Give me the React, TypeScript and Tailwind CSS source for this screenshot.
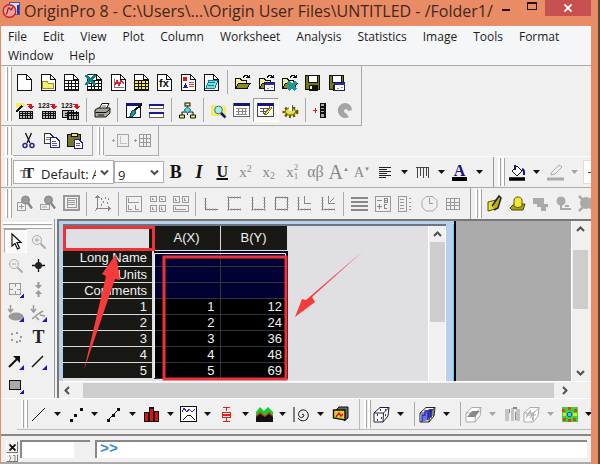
import { ReactNode } from 'react';

const MENUS = [
	'File', 'Edit', 'View', 'Plot', 'Column', 'Worksheet', 'Analysis', 'Statistics', 'Image', 'Tools', 'Format', 'Window', 'Help',
];

const ROWS = [
	{ label: 'Long Name', a: '', b: '' },
	{ label: 'Units', a: '', b: '' },
	{ label: 'Comments', a: '', b: '' },
	{ label: '1', a: '1', b: '12' },
	{ label: '2', a: '2', b: '24' },
	{ label: '3', a: '3', b: '36' },
	{ label: '4', a: '4', b: '48' },
	{ label: '5', a: '5', b: '69' },
];

const Svg = ({ children, smooth }: { children: ReactNode; smooth?: boolean }) => (
	<svg
		className="size-[17px] shrink-0 overflow-visible"
		viewBox="0 0 17 17"
		fill="none"
		stroke="#111"
		shapeRendering={smooth ? 'auto' : 'crispEdges'}
		aria-hidden="true"
	>
		{children}
	</svg>
);

const Page = ({ children }: { children?: ReactNode }) => (
	<Svg>
		<path d="M1.5 .5H10.5L15.5 5.5V16.5H1.5Z" fill="#fff" strokeWidth="1.4" />
		<path d="M10.5 .5V5.5H15.5" />
		{children}
	</Svg>
);

const Grid = ({ fill = '#fff' }: { fill?: string }) => (
	<>
		<rect x="1.5" y="6.5" width="14" height="9" fill={fill} />
		<path d="M5 6.500V15.500M8.500 6.500V15.500M12 6.500V15.500M1.500 9.500H15.500M1.500 12.500H15.500" />
	</>
);

const Folder = ({ children }: { children?: ReactNode }) => (
	<Svg>
		<path d="M1.5 14.500V4.500H6L7.500 6H12.500V9" fill="#f3efa0" />
		<path d="M1.500 14.500L4.500 9.500H16L13 14.500Z" fill="#8b8a1c" />
		<path d="M9 3.500C11 .8 13 .8 14.500 2.800M15.500 .5V3.500H12" />
		{children}
	</Svg>
);

const MiniWindow = () => (
	<>
		<rect x="6.5" y="8.500" width="10" height="8" fill="#fff" stroke="#223" />
		<path d="M6.500 9.500H16.500" stroke="#2b2bc0" strokeWidth="2" />
		<path d="M9 14.500H11M13 13.500H15" stroke="#88c" />
	</>
);

const Floppy = ({ children }: { children?: ReactNode }) => (
	<Svg>
		<path d="M1.500 1.500H15.500V15.500H1.500Z" fill="#77770f" strokeWidth="1.500" />
		<rect x="4" y="1.500" width="9" height="7" fill="#fff" />
		<rect x="5" y="11" width="8" height="5" fill="#111" />
		<rect x="6" y="12" width="2" height="3" fill="#eee" stroke="none" />
		{children}
	</Svg>
);

const ImportTable = ({ kind }: { kind: 'wizard' | 'one' | 'many' }) => (
	<Svg>
		{kind === 'wizard' ? (
			<>
				<path d="M0 1H8V6H0Z" fill="#f7ee54" stroke="none" />
				<path d="M0 10L6 4" strokeWidth="2.500" />
			</>
		) : (
			<text x="-1" y="6" className="font-['Liberation_Sans'] text-[7px] font-bold" fill="#111" stroke="none">
				123
			</text>
		)}
		<path d="M11 2.500H15V5M13 4.500L15 7L17 4.500Z" stroke="#e01515" fill="#e01515" />
		{kind === 'many' && <rect x="0" y="8" width="11" height="7" fill="#bbb" />}
		<rect x={kind === 'many' ? 5 : 3} y={kind === 'many' ? 10 : 9} width={kind === 'many' ? 11 : 13} height="7" fill="#bbb" />
		<path d="M6.500 9V16.500M9 9V16.500M11.500 9V16.500M14 9V16.500M3 11.500H16M3 13.500H16" />
	</Svg>
);

const ScissorsIcon = () => (
	<Svg smooth>
		<path d="M5.500 1L10 11M11.500 1L7 11" strokeWidth="1.300" />
		<circle cx="5" cy="13.500" r="2" stroke="#1f1f9a" strokeWidth="1.400" />
		<circle cx="12" cy="13.500" r="2" stroke="#1f1f9a" strokeWidth="1.400" />
	</Svg>
);

const Lens = ({ plus, body }: { plus?: boolean; body?: boolean }) => (
	<Svg smooth>
		{body ? (
			<>
				<rect x="1.500" y={plus ? 7.500 : 9.500} width={plus ? 8 : 9} height={plus ? 8 : 5} stroke="#999" />
				<path d={plus ? 'M5.500 9V14M3 11.500H8' : 'M3 12H8'} stroke="#999" />
				<circle cx="9.500" cy="5" r="4" fill="#999" stroke="#888" />
				<path d="M12 8L16 13.500" stroke="#888" strokeWidth="2.500" />
			</>
		) : (
			<>
				<circle cx="7" cy="7" r="4.500" stroke="#aaa" />
				<path d={plus ? 'M7 4.500V9.500M4.500 7H9.500' : 'M4.500 7H9.500'} stroke="#aaa" />
				<path d="M10.500 10.500L15.500 15.500" stroke="#aaa" strokeWidth="2" />
			</>
		)}
	</Svg>
);

const Panels = ({ rows }: { rows: [number, number, number, number][] }) => (
	<Svg>
		{rows.map(([x, y, w, h]) => (
			<g key={`${x}-${y}`} stroke="#999">
				<rect x={x} y={y} width={w} height={h} />
				<path d={`M${x + 2} ${y + 2}V${y + h - 2}H${x + w - 2}`} />
			</g>
		))}
	</Svg>
);

const Axes = ({ d, extra }: { d: string; extra?: string }) => (
	<Svg>
		<path d={d} stroke="#777" />
		<path d={d} stroke="#aaa" strokeWidth="3" strokeDasharray="1 2" opacity=".6" />
		{extra && <path d={extra} stroke="#888" />}
	</Svg>
);

const Cube = ({ gray, children }: { gray?: boolean; children?: ReactNode }) => (
	<Svg smooth>
		<path d="M1 7L7 1.500H16L15 10L10 16H1Z" fill="#fff" stroke={gray ? '#aaa' : '#222'} />
		<path d="M1 7H10.500L16 1.500M10.500 7L10 16" stroke={gray ? '#aaa' : '#222'} />
		{children}
	</Svg>
);

const Tool = ({ label, children, className = '' }: { label: string; children: ReactNode; className?: string }) => (
	<button type="button" aria-label={label} className={`flex h-6 min-w-0 flex-1 items-center justify-center ${className}`}>
		{children}
	</button>
);

const Sep = () => (
	<div className="flex h-6 w-2 shrink-0 justify-center">
		<div className="w-px bg-[#aaa]" />
	</div>
);

const Grip = () => (
	<div className="mr-px flex shrink-0 gap-px self-stretch py-px pl-1">
		<div className="w-[3px] border-r border-[#a5a5a5] bg-white" />
		<div className="w-[3px] border-r border-[#a5a5a5] bg-white" />
	</div>
);

const Arrow = ({ label, gray }: { label: string; gray?: boolean }) => (
	<button type="button" aria-label={label} className="flex h-6 min-w-0 flex-1 items-center justify-center">
		<svg className="h-1 w-[7px]" viewBox="0 0 7 4" aria-hidden="true">
			<path d="M0 0H7L3.500 4Z" fill={gray ? '#a5a5a5' : '#111'} />
		</svg>
	</button>
);

const Chevron = ({ d }: { d: string }) => (
	<svg className="size-[9px]" viewBox="0 0 9 9" fill="none" stroke="#505050" strokeWidth="2" aria-hidden="true">
		<path d={d} />
	</svg>
);

const TitleBar = () => (
	<header className="flex h-[26px] items-start bg-[#e98c66]">
		<svg className="mt-[2px] mr-1 ml-[2px] h-4 w-[18px] shrink-0" viewBox="0 0 18 16" fill="none" aria-hidden="true">
			<rect x="7.500" y=".5" width="10" height="12" fill="#d7def8" stroke="#4254b0" />
			<path d="M16 3V12" stroke="#2338a8" strokeWidth="2" />
			<circle cx="7.500" cy="9" r="6.300" fill="#eea09a" stroke="#c2272d" strokeWidth="1.500" />
			<path d="M4 12C6 12 5 6 7 6S8 11 11 5" stroke="#a81c24" strokeWidth="1.300" />
		</svg>
		<h1 className="min-w-0 flex-1 text-[16px] leading-[22px] whitespace-nowrap text-[#40271b]">
			OriginPro 8 - C:\Users\...\Origin User Files\UNTITLED - /Folder1/
		</h1>
		<button type="button" aria-label="Minimize" className="flex h-4 w-[26px] shrink-0 items-center justify-center">
			<span className="mt-1 h-[2px] w-2 bg-[#221510]" />
		</button>
		<button type="button" aria-label="Maximize" className="flex h-4 w-[26px] shrink-0 items-center justify-center">
			<span className="mt-[-4px] h-2 w-[10px] border border-t-2 border-[#221510]" />
		</button>
		<button type="button" aria-label="Close" className="mr-[7px] flex h-4 w-[46px] shrink-0 items-center justify-center bg-[#c75050]">
			<svg className="size-2" viewBox="0 0 8 8" stroke="#fff" strokeWidth="1.800" aria-hidden="true">
				<path d="M.5 .5L7.500 7.500M7.500 .5L.5 7.500" />
			</svg>
		</button>
	</header>
);

const StandardToolbar = () => (
	<div className="flex w-[361px] border-r border-b border-[#aaa] pb-[3px]">
		<Grip />
		<div className="flex flex-col gap-1 pt-1">
			<div className="flex w-[335px]">
				<Tool label="New project"><Page /></Tool>
				<Tool label="New folder">
					<Page><path d="M2.500 14.500V7.500H7L8 9H13.500V14.500Z" fill="#f4ee75" stroke="#998f25" /></Page>
				</Tool>
				<Tool label="New worksheet"><Page><Grid /></Page></Tool>
				<Tool label="New Excel">
					<Page>
						<Grid />
						<path d="M0 1L9 11M9 1L0 11" stroke="#12808b" strokeWidth="3" />
					</Page>
				</Tool>
				<Tool label="New graph">
					<Page>
						<path d="M4.500 5V13.500H14" stroke="#777" />
						<path d="M5 11L7 7L9 11L11 7L14 9" stroke="#e02030" strokeWidth="1.400" />
					</Page>
				</Tool>
				<Tool label="New matrix"><Page><Grid fill="#f5ec45" /></Page></Tool>
				<Tool label="New function">
					<Page>
						<text x="3" y="13" className="font-['Liberation_Sans'] text-[11px] font-bold" fill="#111" stroke="none">fx</text>
					</Page>
				</Tool>
				<Tool label="New layout">
					<Page>
						<path d="M3 3H7V7H3Z" fill="#e01818" stroke="none" />
						<path d="M9 8.500H14M9 10.500H14M9 12.500H14" stroke="#e24040" />
						<path d="M3 14L5.500 9L8 14Z" fill="#1d1da5" stroke="none" />
					</Page>
				</Tool>
				<Tool label="New notes">
					<Page>
						<path d="M6 6H15L12 14H3Z" fill="#7adce5" stroke="#147c88" />
						<path d="M6 8.500H12M5 11H11" stroke="#147c88" />
					</Page>
				</Tool>
				<Sep />
				<Tool label="Open"><Folder /></Tool>
				<Tool label="Open template"><Folder><MiniWindow /></Folder></Tool>
				<Tool label="Open Excel"><Folder><path d="M7 8L15 16M15 8L7 16" stroke="#159aa5" strokeWidth="3" /></Folder></Tool>
				<Tool label="Save project"><Floppy /></Tool>
				<Tool label="Save template"><Floppy><MiniWindow /></Floppy></Tool>
			</div>
			<div className="flex w-[343px]">
				<Tool label="Import wizard"><ImportTable kind="wizard" /></Tool>
				<Tool label="Import single ASCII"><ImportTable kind="one" /></Tool>
				<Tool label="Import multiple ASCII"><ImportTable kind="many" /></Tool>
				<Sep />
				<Tool label="Print">
					<Svg smooth>
						<path d="M5 7L8 1.500H15L12.500 7Z" fill="#fff" />
						<path d="M1 8L4 6H16V11L12 15H1Z" fill="#a6a79c" />
						<path d="M1.500 10.500H12L15.500 7.500M4 13H10" />
						<path d="M8 4H12" stroke="#777" />
					</Svg>
				</Tool>
				<Sep />
				<Tool label="Refresh">
					<Svg>
						<rect x="1.500" y="1.500" width="14" height="14" fill="#fff" />
						<path d="M1 2.500H16" stroke="#15157d" strokeWidth="3" />
						<path d="M17 2L9 9" strokeWidth="2" />
						<path d="M5 14L7 9L10 8L11 11L8 14Z" fill="#159aa5" stroke="#0d5962" />
					</Svg>
				</Tool>
				<Tool label="Duplicate">
					<Svg>
						<rect x="1.500" y="2.500" width="14" height="4" fill="#fff" stroke="#666" />
						<path d="M1 2.500H16" stroke="#1a1a90" strokeWidth="2" />
						<rect x="1.500" y="10.500" width="14" height="5" fill="#fff" stroke="#666" />
						<path d="M1 10.500H16" stroke="#1a1a90" strokeWidth="2" />
					</Svg>
				</Tool>
				<Sep />
				<Tool label="Custom routine">
					<Svg smooth>
						<path d="M8.500 4V13M3 14V10H14V14" />
						<rect x="6" y="1" width="5" height="3" fill="#f2ec62" />
						<path d="M8.500 5L12 8L8.500 11L5 8Z" fill="#55d7e0" stroke="#167984" />
						<path d="M.5 13H5.500V16H.5ZM11.500 13H16.500V16H11.500Z" fill="#f2ec62" />
					</Svg>
				</Tool>
				<Sep />
				<Tool label="Project explorer">
					<Svg smooth>
						<path d="M1 3H6L7 4H16V14H1Z" fill="#f4ec68" stroke="none" />
						<circle cx="8.500" cy="8" r="3.800" fill="#a8edf2" stroke="#207b88" />
						<path d="M11 11L15.500 15.500" stroke="#15157d" strokeWidth="2.500" />
					</Svg>
				</Tool>
				<Tool label="Results log">
					<Svg>
						<rect x=".5" y="1.500" width="16" height="13" fill="#fff" stroke="#666" />
						<path d="M.5 2.500H16.500" stroke="#15157d" strokeWidth="3" />
						<path d="M3 6.500H14M3 9.500H14M3 12H14M5.500 6V12M9 6V12M12 6V12" stroke="#888" />
					</Svg>
				</Tool>
				<Tool label="Command window" className="border border-white border-t-[#999] border-l-[#999] bg-[#f8f8f8]">
					<Svg>
						<rect x=".5" y="1.500" width="16" height="13" fill="#fff" stroke="#444" />
						<path d="M.5 2.500H16.500" stroke="#15157d" strokeWidth="3" />
						<path d="M3 6.500H11M3 9.500H9M6.500 6V12" stroke="#555" />
						<path d="M8 13L14 5" stroke="#6e6b16" strokeWidth="3" />
						<path d="M9 12L14 5.500" stroke="#f4e94d" />
					</Svg>
				</Tool>
				<Tool label="Code builder">
					<Svg smooth>
						<ellipse cx="8.500" cy="10" rx="6.500" ry="4.500" fill="#dcd032" stroke="#5d570c" strokeWidth="3" strokeDasharray="2 2" />
						<ellipse cx="8.500" cy="9.500" rx="5" ry="3.500" fill="#e7dd43" stroke="#6c6511" />
						<path d="M8.500 3V9" stroke="#fff" strokeWidth="3" />
						<path d="M10.500 3V9" stroke="#555" />
					</Svg>
				</Tool>
				<Sep />
				<Tool label="Add column">
					<Svg>
						<path d="M2 6V11M0 8.500H4" stroke="#e01818" />
						<rect x="7.500" y="1.500" width="5" height="14" fill="#aaa" />
						<path d="M12 1V16M7 5H12M7 8H12M7 11H12" strokeWidth="1.500" />
					</Svg>
				</Tool>
				<Tool label="Rescale">
					<Svg smooth>
						<path d="M9 1A7.500 7.500 0 1 0 13 15L9 10L16 8A7 7 0 0 0 9 1" fill="#a5a5a5" stroke="none" />
						<circle cx="10" cy="9" r="2" fill="#eee" stroke="none" />
					</Svg>
				</Tool>
			</div>
		</div>
	</div>
);

const EditToolbar = () => (
	<div className="flex h-[30px] items-center">
		<Grip />
		<div className="flex w-[80px] items-center self-stretch border-r border-b border-[#aaa] pr-[6px] pl-1">
			<Tool label="Cut"><ScissorsIcon /></Tool>
			<Tool label="Copy">
				<Svg>
					<path d="M1.500 1.500H7L10 4.500V11.500H1.500Z" fill="#fff" stroke="#333" />
					<path d="M3 5.500H7M3 7.500H8" stroke="#777" />
					<path d="M7.500 5.500H13L16 8.500V15.500H7.500Z" fill="#fff" stroke="#22229a" />
					<path d="M9 9.500H13M9 11.500H14M9 13.500H14" stroke="#5555b5" />
				</Svg>
			</Tool>
			<Tool label="Paste">
				<Svg>
					<rect x="1.500" y="2.500" width="13" height="12" fill="#77772a" />
					<rect x="5" y="1" width="6" height="3" fill="#e9e485" />
					<path d="M8.500 7.500H13L16 10.500V16.500H8.500Z" fill="#fff" stroke="#22229a" />
					<path d="M10 11.500H14M10 13.500H14" stroke="#5555b5" />
				</Svg>
			</Tool>
		</div>
		<Grip />
		<div className="flex w-[54px] items-center self-stretch border-r border-b border-[#aaa] px-1">
			<Tool label="Add layer">
				<Svg>
					<path d="M0 8.500H3M1.500 7V10M5.500 2.500H16.500V14.500H5.500Z" stroke="#a5a5a5" />
					<path d="M8.500 4V11.500H15" stroke="#c2c2c2" />
				</Svg>
			</Tool>
			<Tool label="Add grid">
				<Svg>
					<path d="M0 8.500H3M1.500 7V10M5.500 2.500H16.500V14.500H5.500ZM5 6.500H16M5 10.500H16M9.500 2V14M12.500 2V14" stroke="#999" />
				</Svg>
			</Tool>
		</div>
	</div>
);

const FormatToolbar = () => (
	<div className="flex h-8 items-center overflow-hidden border-t border-b border-t-white border-b-[#aaa]">
		<Grip />
		<div className="relative h-6 w-[101px] shrink-0 border border-[#abadb3] bg-white">
			<span className="pointer-events-none absolute top-[2px] left-[6px] flex items-baseline font-['Liberation_Serif'] text-[15px] leading-5 font-bold text-[#222]">
				<span className="text-[12px] text-[#666]">T</span>
				<span className="-ml-1">T</span>
			</span>
			<select aria-label="Font" className="h-full w-[82px] appearance-none bg-transparent pb-[3px] pl-[27px] text-[13px] text-[#222]">
				<option>Default: Arial</option>
			</select>
			<span className="pointer-events-none absolute top-[7px] right-1"><Chevron d="M1 2.500L4.500 6L8 2.500" /></span>
		</div>
		<div className="relative h-[22px] w-[50px] shrink-0 border border-[#abadb3] bg-white">
			<select aria-label="Font size" className="h-full w-full appearance-none bg-transparent pb-[3px] pl-[3px] text-[13px] text-[#222]">
				<option>9</option>
			</select>
			<span className="pointer-events-none absolute top-[6px] right-1"><Chevron d="M1 2.500L4.500 6L8 2.500" /></span>
		</div>
		<div className="flex w-[233px] shrink-0 font-['Liberation_Serif'] text-[#888]">
			<Tool label="Bold"><b className="text-[18px] text-[#111]">B</b></Tool>
			<Tool label="Italic"><b className="text-[18px] text-[#111] italic">I</b></Tool>
			<Tool label="Underline"><b className="text-[16px] text-[#111] underline decoration-2">U</b></Tool>
			<Tool label="Superscript"><span className="text-[15px]">x<sup className="text-[10px]">2</sup></span></Tool>
			<Tool label="Subscript"><span className="text-[15px]">x<sub className="text-[10px]">2</sub></span></Tool>
			<Tool label="Super-subscript">
				<span className="text-[15px]">x</span>
				<span className="flex flex-col text-[9px] leading-[9px]"><span>2</span><span>1</span></span>
			</Tool>
			<Tool label="Greek"><span className="text-[16px]">αβ</span></Tool>
			<Tool label="Increase font"><span className="text-[20px]">A</span><sup className="text-[6px]">▲</sup></Tool>
			<Tool label="Decrease font"><span className="text-[14px]">A</span><sup className="text-[6px]">▼</sup></Tool>
			<Tool label="Alignment">
				<Svg><path d="M2 3.500H14M2 5.500H10M2 7.500H14M2 9.500H10M2 11.500H14M2 13.500H9" stroke="#222" /></Svg>
			</Tool>
		</div>
		<div className="flex w-[14px] shrink-0"><Arrow label="Alignment options" /></div>
		<div className="flex w-[23px] shrink-0">
			<Tool label="Line pattern">
				<Svg>
					<path d="M2 3.500H15M3.500 3V14M6.500 3V12M9.500 3V14M12.500 3V12M14.500 3V14" stroke="#444" />
				</Svg>
			</Tool>
		</div>
		<div className="flex w-[14px] shrink-0"><Arrow label="Line pattern options" /></div>
		<div className="flex w-[23px] shrink-0">
			<Tool label="Font color">
				<span className="flex flex-col items-center border-b-4 border-black px-[2px] font-['Liberation_Serif'] text-[16px] leading-[13px] font-bold text-[#15157d]">A</span>
			</Tool>
		</div>
		<div className="mr-[6px] flex w-4 shrink-0"><Arrow label="Font color options" /></div>
		<div className="shrink-0 self-stretch border-l border-[#999]" />
		<Grip />
		<div className="flex w-[23px] shrink-0">
			<Tool label="Fill color">
				<Svg smooth>
					<path d="M3 7L8 2L13 7L8 12Z" fill="#fff" />
					<path d="M6 6V1M13 5C16 6 15 9 15 11" stroke="#15157d" strokeWidth="2" />
					<path d="M0 15H16" stroke="#000" strokeWidth="3.500" />
				</Svg>
			</Tool>
		</div>
		<div className="flex w-[14px] shrink-0"><Arrow label="Fill color options" /></div>
		<div className="flex w-[24px] shrink-0">
			<Tool label="Line color">
				<Svg smooth>
					<path d="M4 9L12 1L15 3L8 10L4 11Z" stroke="#aaa" />
					<path d="M0 15H17" stroke="#aaa" strokeWidth="3" />
				</Svg>
			</Tool>
		</div>
		<div className="flex w-[14px] shrink-0"><Arrow label="Line color options" gray /></div>
		<div className="ml-[2px] flex h-6 min-w-0 flex-1 items-center border border-r-0 border-[#ddd] bg-white pl-1"><span className="h-px w-full bg-[#444]" /></div>
	</div>
);

const GraphToolbar = () => (
	<div className="flex h-[31px] items-center overflow-hidden">
		<Grip />
		<div className="flex w-[451px] shrink-0">
			<Tool label="Zoom in"><Lens plus body /></Tool>
			<Tool label="Zoom out"><Lens body /></Tool>
			<Tool label="Whole page">
				<Svg>
					<rect x="1" y="1" width="15" height="14" stroke="#999" strokeWidth="1.500" />
					<rect x="4" y="3.500" width="9" height="9" stroke="#999" />
					<path d="M5 5.500H12M5 7.500H12M5 9.500H12" stroke="#999" />
				</Svg>
			</Tool>
			<Sep />
			<Tool label="Rescale axes">
				<Svg>
					<path d="M3.500 1V13.500H16M1.500 3L3.500 .5L5.500 3M14 11.500L16.500 13.500L14 15.500M3.500 13L1 16" stroke="#888" />
					<path d="M7 4H8M11 3H12M14 4H15M9 7H10M13 8H14M7 10H8" stroke="#888" strokeWidth="2" />
				</Svg>
			</Tool>
			<Sep />
			<Tool label="Merge"><Svg><path d="M1 1H16V16H1ZM3.500 3V7.500H14M3.500 10V14H7M10.500 10V14H14" stroke="#999" /></Svg></Tool>
			<Tool label="Extract layers"><Panels rows={[[1, 1, 6, 5], [10, 1, 6, 5], [1, 10, 6, 6], [10, 10, 6, 6]]} /></Tool>
			<Tool label="Extract graphs"><Panels rows={[[1, 1, 6, 6], [10, 1, 6, 6], [1, 10, 15, 6]]} /></Tool>
			<Sep />
			<Tool label="Bottom left axes"><Axes d="M2.500 3V14.500H15" /></Tool>
			<Tool label="Top left axes"><Axes d="M15 2.500H2.500V14.500H15" /></Tool>
			<Tool label="Left bottom right axes"><Axes d="M2.500 2V14.500H14.500V2" /></Tool>
			<Tool label="Box axes"><Axes d="M2.500 2.500H14.500V14.500H2.500Z" /></Tool>
			<Tool label="Inset axes"><Axes d="M2.500 2V14.500H15" extra="M8.500 1V8.500H15" /></Tool>
			<Tool label="Inset with data"><Axes d="M2.500 2V14.500H15" extra="M8.500 1V8.500H15M10 7L14 3" /></Tool>
			<Sep />
			<Tool label="Legend lines"><Svg><path d="M0 3H17M0 7H17M0 11H17M0 15H17" stroke="#888" strokeWidth="2.500" /></Svg></Tool>
			<Tool label="Legend">
				<Svg>
					<rect x="1" y="1" width="15" height="15" stroke="#999" />
					<path d="M3 5.500H8M3 11.500H8M5.500 9V14M10 3.500H13V7.500H10ZM13 9.500H10V13.500H13M10 5.500H13" stroke="#888" />
				</Svg>
			</Tool>
			<Tool label="Color scale"><Svg><path d="M1 1H9V16H1ZM3 4H7M3 7H7M3 10H7M3 13H7M12 3H14M12 7H14M12 11H14M12 14H14" stroke="#999" /></Svg></Tool>
			<Tool label="Date and time"><Svg smooth><path d="M5 1.500H12L16 5.500V12L12 16H5L1 12V5.500Z" stroke="#aaa" /><path d="M8.500 3V8.500H12" stroke="#999" /></Svg></Tool>
			<Tool label="New table"><Svg><path d="M2 3.500H15V14H2ZM2 7H15M2 10.500H15M6.500 3V14M10.500 3V14" stroke="#999" /></Svg></Tool>
		</div>
		<div className="ml-[6px] shrink-0 self-stretch border-l border-[#999]" />
		<Grip />
		<div className="flex w-[115px] shrink-0">
			<Tool label="Reader">
				<Svg smooth>
					<path d="M2 7L10 5L9 14L2 16Z" fill="#e8e22c" stroke="#504d08" />
					<path d="M6 11L13 1L15 3L12 13L8 15" fill="#b6ae19" stroke="#222" strokeWidth="1.500" />
				</Svg>
			</Tool>
			<Tool label="Mask">
				<Svg smooth>
					<path d="M1 13L5 9H16L14 15H3Z" fill="#a89f13" stroke="#4c4709" />
					<path d="M5 5C5 1 13 1 13 5V11C11 13 7 13 5 11Z" fill="#eee734" stroke="#5f590c" />
				</Svg>
			</Tool>
			<Tool label="Mask range"><Svg><path d="M1 3H12V9H1ZM5 9H16V12H5ZM9 12H14V16H9Z" fill="#aaa" stroke="none" /></Svg></Tool>
			<Tool label="Mask point"><Svg smooth><circle cx="6" cy="6" r="4.500" fill="#aaa" stroke="none" /><path d="M6 10V14H16M10 11H14" stroke="#aaa" strokeWidth="2" /></Svg></Tool>
			<Tool label="Unmask"><Svg smooth><circle cx="8" cy="8" r="6" fill="#aaa" stroke="none" /><path d="M1 1L16 16M16 1L1 16" stroke="#aaa" strokeWidth="2.500" /></Svg></Tool>
		</div>
	</div>
);

const Corner = () => <path d="M17 12V17H12Z" fill="#1717c4" stroke="none" />;

const ToolsPanel = () => (
	<aside className="flex w-[54px] shrink-0 flex-col border-r border-[#999]">
		<div className="mx-[2px] mt-[3px] h-[3px] border-b border-[#a5a5a5] bg-white" />
		<div className="mx-[2px] mt-px h-[3px] border-b border-[#a5a5a5] bg-white" />
		<div className="ml-[3px] grid w-[46px] flex-1 auto-rows-fr grid-cols-2">
			<Tool label="Pointer" className="border border-white border-t-[#aaa] border-l-[#aaa] bg-[#f9f9f9]">
				<Svg smooth><path d="M5 1V13L8 10.500L10.500 16L12.500 15L10 9.500H14Z" fill="#fff" strokeWidth="1.200" /></Svg>
			</Tool>
			<Tool label="Zoom in tool"><Lens plus /></Tool>
			<Tool label="Zoom out tool"><Lens /></Tool>
			<Tool label="Screen reader">
				<Svg smooth><path d="M8.500 2V15M2 8.500H15" strokeWidth="1.300" /><circle cx="8.500" cy="8.500" r="3.500" fill="#222" stroke="none" /></Svg>
			</Tool>
			<Tool label="Data reader"><Svg><path d="M2.500 2.500H13.500V13.500H2.500ZM8 2V6M8 10V14M2 8H6M10 8H14" stroke="#999" /><Corner /></Svg></Tool>
			<Tool label="Data selector"><Svg smooth><path d="M8.500 1V5M8.500 12V16" stroke="#999" strokeWidth="2" /><path d="M5 4H12L8.500 8ZM5 13H12L8.500 9Z" fill="#999" stroke="none" /></Svg></Tool>
			<Tool label="Selection on graph">
				<Svg smooth><ellipse cx="9" cy="11.500" rx="7.500" ry="4" fill="#999" stroke="none" /><path d="M3.500 0V6M1 4L3.500 7L6 4" stroke="#999" strokeWidth="1.500" /><Corner /></Svg>
			</Tool>
			<Tool label="Mask points">
				<Svg smooth><path d="M3.500 0V6M1 4L3.500 7L6 4M2 14L8 9L13 6M10 10L15 11M6 12L9 15" stroke="#999" strokeWidth="1.500" /><Corner /></Svg>
			</Tool>
			<Tool label="Draw data"><Svg><path d="M4 5H6M9 4H11M13 8H15M4 11H6M9 13H11M12 12H14" stroke="#999" strokeWidth="2" /></Svg></Tool>
			<Tool label="Text"><b className="font-['Liberation_Serif'] text-[18px] text-[#222]">T</b></Tool>
			<Tool label="Arrow tool">
				<Svg smooth><path d="M2 14L10 6" strokeWidth="2" /><path d="M6 3H13V10Z" fill="#111" stroke="none" /><Corner /></Svg>
			</Tool>
			<Tool label="Line tool"><Svg smooth><path d="M2 14L13 3" strokeWidth="1.500" /><Corner /></Svg></Tool>
			<Tool label="Rectangle tool"><Svg><rect x="2.500" y="3.500" width="11" height="9" fill="#aaa" strokeWidth="1.400" /><Corner /></Svg></Tool>
		</div>
	</aside>
);

const Worksheet = () => (
	<table className="w-[224px] table-fixed border-collapse bg-black font-['Liberation_Sans'] text-[13px] leading-[15px] text-[#f2f2f2]">
		<colgroup>
			<col className="w-[90px]" />
			<col className="w-[67px]" />
			<col className="w-[67px]" />
		</colgroup>
		<thead>
			<tr className="h-6">
				<th className="border-r border-[#ddd] bg-[#e0dfe4]" aria-label="Select all" />
				<th className="border-r border-b border-[#ddd] bg-[#181814] font-normal">A(X)</th>
				<th className="border-r border-b border-[#ddd] bg-[#181814] font-normal">B(Y)</th>
			</tr>
		</thead>
		<tbody>
			{ROWS.map(({ label, a, b }) => (
				<tr key={label} className="h-4">
					<th className="border-r-2 border-b border-[#ddd] bg-[#181814] p-0 pr-[5px] text-right font-normal">{label}</th>
					<td className={`border-r border-b border-[#33333c] p-0 pr-[5px] text-right ${a ? '' : 'bg-[#010133]'}`}>{a}</td>
					<td className={`border-b border-[#33333c] p-0 pr-[5px] text-right ${b ? '' : 'bg-[#010133]'}`}>{b}</td>
				</tr>
			))}
		</tbody>
	</table>
);

// red boxes and arrows drawn on top of the sheet
const Annotations = () => (
	<svg className="pointer-events-none absolute top-0 left-0 h-[155px] w-[310px]" viewBox="0 0 310 155" fill="none" aria-hidden="true">
		<path d="M91.500 152V27.500H222.500V32" stroke="#eee" />
		<path d="M88 3V22" stroke="#181814" strokeWidth="4" />
		<rect x="1.500" y="1.500" width="89" height="22" stroke="#ee3338" strokeWidth="3" />
		<rect x="101" y="31" width="122" height="122" stroke="#ee3338" strokeWidth="3" />
		<path d="M21 144L43 50L39 48L53 28L57 54L52 53Z" fill="#f53b3b" />
		<path d="M300 25L249 71L252 76L232 91L239 73L243 74Z" fill="#f53b3b" />
	</svg>
);

const Workspace = () => (
	<div className="flex flex-1">
		<ToolsPanel />
		<main className="ml-[2px] flex min-w-0 flex-1 flex-col border-t-2 border-l-2 border-[#777]">
			<div className="flex flex-1 bg-[#ababab]">
				<div className="flex w-[397px] shrink-0 flex-col border-r-2 border-black bg-[#b8d0ea]">
					<div className="mt-[3px] flex flex-1 border-r border-[#4fd2f5]">
						<div className="ml-1 flex flex-1 border-t-2 border-[#6d7583]">
							<div className="relative flex-1 bg-[#e0dfe4]">
								<Worksheet />
								<Annotations />
							</div>
							<div className="flex w-[18px] flex-col items-center border-x border-white bg-[#f0f0f0]">
								<button type="button" aria-label="Scroll sheet up" className="flex h-4 items-center"><Chevron d="M1 6L4.500 2.500L8 6" /></button>
								<div className="h-20 w-[15px] bg-[#cdcdcd]" />
							</div>
						</div>
						<div className="w-[7px]" />
					</div>
				</div>
				<div className="flex-1" />
				<div className="flex w-[17px] flex-col items-center border-l border-white bg-[#f0f0f0]">
					<button type="button" aria-label="Scroll up" className="flex h-[17px] items-center"><Chevron d="M1 6L4.500 2.500L8 6" /></button>
					<div className="mt-3 h-[59px] w-[15px] bg-[#cdcdcd]" />
					<div className="flex-1" />
					<button type="button" aria-label="Scroll down" className="flex h-[17px] items-center"><Chevron d="M1 3L4.500 6.500L8 3" /></button>
				</div>
				<div className="w-[3px] bg-[#f0f0f0]" />
			</div>
			<div className="flex h-[17px] items-center border-t border-white bg-[#f0f0f0]">
				<button type="button" aria-label="Scroll left" className="flex w-6 justify-center pr-2"><Chevron d="M6 1L2.500 4.500L6 8" /></button>
				<div className="h-[15px] flex-1 bg-[#cdcdcd]" />
				<button type="button" aria-label="Scroll right" className="flex w-5 justify-center"><Chevron d="M3 1L6.500 4.500L3 8" /></button>
				<div className="w-[17px]" />
			</div>
		</main>
	</div>
);

const PlotToolbar = () => (
	<div className="flex h-9 items-center overflow-hidden border-t border-[#fff] pb-1">
		<div className="w-4 shrink-0" />
		<div className="flex w-[343px] shrink-0 items-center self-stretch border-r border-b border-[#bbb]">
			<Grip />
			<div className="flex w-[301px] shrink-0">
				<Tool label="Line plot"><Svg smooth><path d="M2 15L15 2" /></Svg></Tool>
				<Arrow label="Line plots" />
				<Tool label="Scatter plot"><Svg><path d="M2 13H5V16H2ZM6 8H9V11H6ZM12 2H15V5H12Z" fill="#111" stroke="none" /></Svg></Tool>
				<Arrow label="Scatter plots" />
				<Tool label="Line and symbol"><Svg><path d="M2 13H5V16H2ZM7 8H10V11H7ZM12 2H15V5H12Z" fill="#111" stroke="none" /><path d="M3 14L14 3" /></Svg></Tool>
				<Arrow label="Line and symbol plots" />
				<Tool label="Column plot"><Svg><path d="M1.500 6.500H5.500V15.500H1.500ZM6.500 2H10.500V15.500H6.500ZM11.500 5.500H15.500V15.500H11.500Z" fill="#d51313" strokeWidth="1.300" /></Svg></Tool>
				<Arrow label="Column plots" />
				<Tool label="Double Y plot">
					<Svg><rect x=".5" y=".5" width="16" height="15" fill="#fff" strokeWidth="1.500" /><path d="M2 6L4 2L7 6L9 3L12 6L15 3" stroke="#2929d5" /><path d="M3 14L8 9H10L15 14" /></Svg>
				</Tool>
				<Arrow label="Double Y plots" />
				<Tool label="Box plot"><Svg><path d="M5 1.500H12M8.500 1.500V5M8.500 12V15.500M5 15.500H12M4.500 6.500H12.500V11.500H4.500ZM4 9H13" stroke="#e22020" strokeWidth="1.300" /></Svg></Tool>
				<Arrow label="Box plots" />
				<Tool label="Area plot"><Svg smooth><path d="M0 6L4 1L8 5L12 1L17 6V10H0Z" fill="#15cc2d" stroke="none" /><path d="M0 10L4 6L9 10L13 6L17 10V15H0Z" fill="#e81b1b" stroke="none" /><path d="M0 11L4 8L9 11L13 8L17 11V16H0Z" fill="#111" stroke="none" /></Svg></Tool>
				<Arrow label="Area plots" />
				<Tool label="Polar plot"><Svg smooth><path d="M1 1V16M9 9C10 7 12 9 10 11C6 13 4 8 7 5C12 1 18 8 14 13C11 16 7 15 5 12" /></Svg></Tool>
				<Arrow label="Polar plots" />
			</div>
			<div className="flex w-5">
				<Tool label="Template library">
					<Svg smooth><path d="M4 4L7 1H16V12L12 15" fill="#666" /><path d="M1.500 4H13V14L1.500 12Z" fill="#dfd034" strokeWidth="1.400" /><path d="M4 11L7 7L9 10L11 8" stroke="#d51313" strokeWidth="1.500" /></Svg>
				</Tool>
			</div>
		</div>
		<div className="flex min-w-0 flex-1 items-center self-stretch border-b border-[#bbb]">
			<Grip />
			<div className="flex w-[38px] shrink-0">
				<Tool label="3D scatter"><Cube><path d="M4 9H5M8 12H9M4 14H5M7 4H8M12 4H13M12 9H13" stroke="#2323cc" strokeWidth="2" /></Cube></Tool>
				<Arrow label="3D scatter plots" />
			</div>
			<Sep />
			<div className="flex w-[38px] shrink-0">
				<Tool label="3D bars"><Cube><path d="M3 16V9H6V5H9V14M10 12V4H12V11" fill="#6c77d8" stroke="#2323bb" strokeWidth="1.300" /><path d="M12 3V12M14 3V10" /></Cube></Tool>
				<Arrow label="3D bar plots" />
			</div>
			<Sep />
			<div className="flex w-[38px] shrink-0">
				<Tool label="3D surface"><Cube gray><path d="M2 11L7 5H15L10 11Z" fill="#888" stroke="none" /></Cube></Tool>
				<Arrow label="3D surfaces" gray />
			</div>
			<div className="flex w-5 shrink-0">
				<Tool label="3D wall"><Svg><path d="M1 3H5V15H1ZM7 2H10V15H7ZM12 3H16V15H12Z" fill="#c5c5c5" stroke="none" /><path d="M5.500 3V7M11.500 6V14M9 2H13" stroke="#888" strokeWidth="1.500" /></Svg></Tool>
			</div>
			<div className="flex w-[38px] shrink-0">
				<Tool label="3D wireframe"><Cube gray><path d="M3 12L7 5M7 12L12 5M3 9H13M7 4L10 14" stroke="#aaa" /></Cube></Tool>
				<Arrow label="3D wireframes" gray />
			</div>
			<div className="flex w-[38px] shrink-0">
				<Tool label="Contour">
					<Svg>
						<rect x=".5" y="1" width="16" height="15" fill="#2ddc38" stroke="none" />
						<path d="M1 4H4M7 2H10M13 4H16M2 13H5M12 13H15M7 14H10" stroke="#eb3b18" strokeWidth="3" />
						<path d="M2 8H5M12 8H16" stroke="#e4df2e" strokeWidth="3" />
						<circle cx="8.500" cy="8.500" r="2" fill="#44c8e8" stroke="#1f4fd0" />
					</Svg>
				</Tool>
				<Arrow label="Contour plots" />
			</div>
		</div>
	</div>
);

const CommandBar = () => (
	<footer className="flex h-[30px] items-start border-t-2 border-b-2 border-t-[#888] border-b-[#aaa] pt-1 pr-1">
		<div className="ml-[5px] flex w-3 flex-col gap-px pt-px">
			<button type="button" aria-label="Close command window" className="flex h-3 items-center justify-center border border-t-white border-r-[#777] border-b-[#777] border-l-white">
				<svg className="size-[7px]" viewBox="0 0 7 7" stroke="#111" strokeWidth="1.800" aria-hidden="true"><path d="M.5 .5L6.500 6.500M6.500 .5L.5 6.500" /></svg>
			</button>
			<button type="button" aria-label="History" className="flex h-2 items-center justify-center border border-t-white border-r-[#777] border-b-[#777] border-l-white">
				<svg className="h-[6px] w-[7px]" viewBox="0 0 7 6" fill="none" stroke="#888" aria-hidden="true"><path d="M0 0L2 3L0 6M4 .5H6V6" /></svg>
			</button>
		</div>
		<div className="ml-[2px] flex h-[18px] w-[70px] border-t-2 border-l-2 border-[#888] bg-[#f0f0f0]">
			<input aria-label="History entry" className="w-[52px] bg-white" />
		</div>
		<input
			aria-label="Command"
			defaultValue=">>"
			className="ml-[5px] h-[18px] min-w-0 flex-1 border-t-2 border-l-2 border-[#888] bg-white pl-[3px] font-['Liberation_Mono'] text-[15px] font-bold text-[#2f86e5]"
		/>
	</footer>
);

const App = () => (
	<div className="flex min-h-screen flex-col border-r-2 border-[#4e4640] bg-[#f0f0f0] font-['Open_Sans',sans-serif]">
		<TitleBar />
		<div className="flex flex-1 flex-col border-r-[7px] border-l border-[#e98c66]">
			<nav className="flex flex-wrap gap-x-4 border-b border-[#aaa] bg-[#f5f6f7] px-[7px] pt-px text-[12px] leading-[19px] text-[#1c1c1c]">
				{MENUS.map((menu) => (
					<button key={menu} type="button">{menu}</button>
				))}
			</nav>
			<StandardToolbar />
			<EditToolbar />
			<FormatToolbar />
			<GraphToolbar />
			<Workspace />
			<PlotToolbar />
			<CommandBar />
		</div>
	</div>
);

export default App;
